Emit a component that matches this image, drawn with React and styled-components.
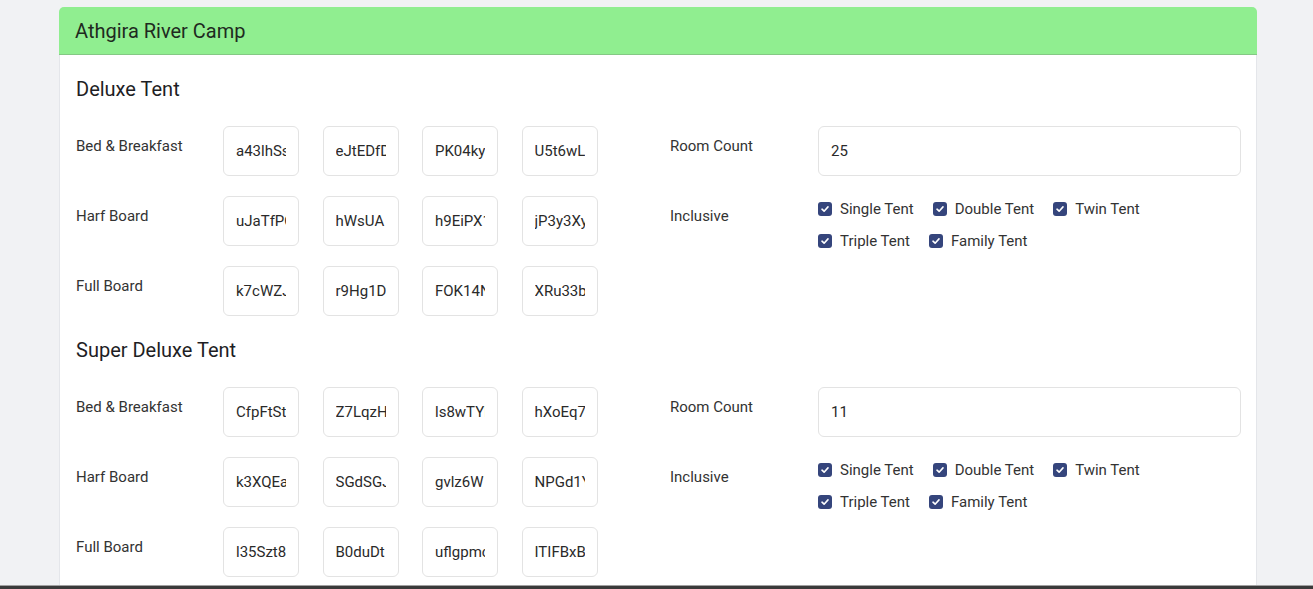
import React from "react";
import styled, { createGlobalStyle } from "styled-components";

const Global = createGlobalStyle`
  html, body { margin: 0; padding: 0; }
  body {
    background: #f1f2f4;
    font-family: Roboto, "Noto Sans", "Liberation Sans", sans-serif;
    color: #2b2b2b;
  }
`;

const Screen = styled.div`
  height: 589px;
  display: flex;
  flex-direction: column;
  overflow: hidden;
`;

const Viewport = styled.div`
  flex: 1;
  overflow: hidden;
  padding: 7px 0 0 59px;
`;

const BottomEdge = styled.div`
  height: 3px;
  background: #3a3a3a;
  border-top: 1px solid #a0a0a0;
`;

const Card = styled.div`
  width: 1198px;
  background: #fff;
  border: 1px solid #e4e6ea;
  border-radius: 5px;
  box-sizing: border-box;
  min-height: 700px;
`;

const CardHeader = styled.div`
  background: #90ee90;
  border-bottom: 1px solid #84c884;
  border-radius: 5px 5px 0 0;
  height: 47px;
  display: flex;
  align-items: center;
  padding: 0 16px;
  font-size: 20px;
  color: #1f2a1f;
  margin: -1px -1px 0;
`;

const CardBody = styled.div`
  padding: 22px 15px 0 16px;
  display: flex;
  flex-direction: column;
  gap: 22px;
`;

const Section = styled.section`
  display: flex;
  flex-direction: column;
  gap: 25px;
`;

const SectionTitle = styled.h3`
  margin: 0;
  font-weight: 400;
  font-size: 20px;
  line-height: 24px;
  color: #1e1e24;
`;

const Columns = styled.div`
  display: grid;
  grid-template-columns: 570px 571px;
  column-gap: 24px;
`;

const Rows = styled.div`
  display: flex;
  flex-direction: column;
  gap: 20px;
`;

const FieldRow = styled.div`
  display: grid;
  grid-template-columns: 148px 1fr;
  align-items: start;
  min-height: 50px;
`;

const Label = styled.div`
  font-size: 15px;
  line-height: 20px;
  padding-top: 10px;
  color: #333;
`;

const PriceGroup = styled.div`
  display: flex;
  gap: 23.5px;
  margin-left: -1px;
`;

const TextInput = styled.input`
  box-sizing: border-box;
  height: 50px;
  width: ${(p) => (p.$wide ? "100%" : "76px")};
  padding: 0 12px;
  border: 1px solid #e3e3e3;
  border-radius: 6px;
  background: #fff;
  font-family: inherit;
  font-size: 15px;
  color: #2a2a2a;
  outline: none;
`;

const ChecksWrap = styled.div`
  display: flex;
  flex-direction: column;
  gap: 12px;
  padding-top: 3px;
`;

const CheckLine = styled.div`
  display: flex;
  gap: 19px;
`;

const CheckItem = styled.label`
  display: flex;
  align-items: center;
  gap: 8px;
  font-size: 15px;
  line-height: 20px;
  color: #333;
`;

const Box = styled.span`
  width: 14px;
  height: 14px;
  border-radius: 3px;
  background: #35457c;
  display: inline-flex;
  align-items: center;
  justify-content: center;
`;

const Check = ({ label }) => (
  <CheckItem>
    <Box>
      <svg width="10" height="10" viewBox="0 0 10 10">
        <path d="M2 5.2 L4.1 7.2 L8 2.9" fill="none" stroke="#fff" strokeWidth="1.6" strokeLinecap="round" strokeLinejoin="round" />
      </svg>
    </Box>
    {label}
  </CheckItem>
);

const sections = [
  {
    title: "Deluxe Tent",
    count: "25",
    rows: [
      ["Bed & Breakfast", ["a43lhSs9", "eJtEDfDk", "PK04ky", "U5t6wL"]],
      ["Harf Board", ["uJaTfPQ", "hWsUA", "h9EiPX1", "jP3y3Xy"]],
      ["Full Board", ["k7cWZJ", "r9Hg1DT", "FOK14N", "XRu33b"]],
    ],
  },
  {
    title: "Super Deluxe Tent",
    count: "11",
    rows: [
      ["Bed & Breakfast", ["CfpFtSt", "Z7LqzH", "ls8wTYl", "hXoEq7"]],
      ["Harf Board", ["k3XQEa", "SGdSGJ", "gvlz6W", "NPGd1Y"]],
      ["Full Board", ["l35Szt8", "B0duDt", "uflgpmc", "ITIFBxBT"]],
    ],
  },
];

export default function App() {
  return (
    <>
      <Global />
      <Screen>
        <Viewport>
          <Card>
            <CardHeader>Athgira River Camp</CardHeader>
            <CardBody>
              {sections.map((s) => (
                <Section key={s.title}>
                  <SectionTitle>{s.title}</SectionTitle>
                  <Columns>
                    <Rows>
                      {s.rows.map(([label, vals]) => (
                        <FieldRow key={label}>
                          <Label>{label}</Label>
                          <PriceGroup>
                            {vals.map((v) => (
                              <TextInput key={v} defaultValue={v} />
                            ))}
                          </PriceGroup>
                        </FieldRow>
                      ))}
                    </Rows>
                    <Rows>
                      <FieldRow>
                        <Label>Room Count</Label>
                        <TextInput $wide defaultValue={s.count} />
                      </FieldRow>
                      <FieldRow>
                        <Label>Inclusive</Label>
                        <ChecksWrap>
                          <CheckLine>
                            <Check label="Single Tent" />
                            <Check label="Double Tent" />
                            <Check label="Twin Tent" />
                          </CheckLine>
                          <CheckLine>
                            <Check label="Triple Tent" />
                            <Check label="Family Tent" />
                          </CheckLine>
                        </ChecksWrap>
                      </FieldRow>
                    </Rows>
                  </Columns>
                </Section>
              ))}
            </CardBody>
          </Card>
        </Viewport>
        <BottomEdge />
      </Screen>
    </>
  );
}
